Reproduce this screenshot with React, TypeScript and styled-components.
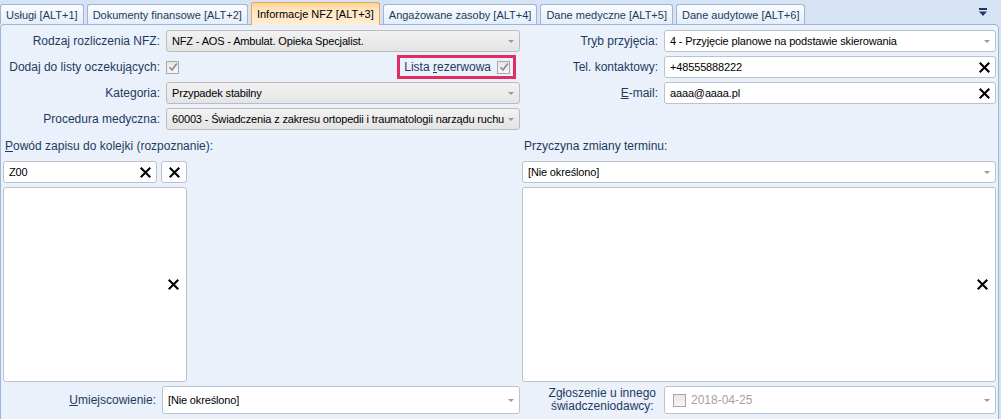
import React from 'react';
import styled, { createGlobalStyle, css } from 'styled-components';

const GlobalStyle = createGlobalStyle`
    html, body {
        margin: 0;
        padding: 0;
        background: #d5e3f5;
    }
    * {
        box-sizing: border-box;
    }
`;

const tabs = [
    { id: 1, label: 'Usługi [ALT+1]' },
    { id: 2, label: 'Dokumenty finansowe [ALT+2]' },
    { id: 3, label: 'Informacje NFZ [ALT+3]', active: true },
    { id: 4, label: 'Angażowane zasoby [ALT+4]' },
    { id: 5, label: 'Dane medyczne [ALT+5]' },
    { id: 6, label: 'Dane audytowe [ALT+6]' },
];

const Window = styled.div`
    width: 1001px;
    height: 419px;
    overflow: hidden;
    background: #d5e3f5;
    font-family: 'Liberation Sans', Arial, sans-serif;
    font-size: 12px;
    color: #000;
`;

const TabStrip = styled.div`
    height: 24px;
    display: flex;
    align-items: flex-end;
    gap: 3px;
    padding-right: 10px;
    position: relative;
    z-index: 1;
`;

const Tab = styled.div<{ $active?: boolean }>`
    height: 20px;
    padding: 0 5px;
    display: flex;
    align-items: center;
    white-space: nowrap;
    font-size: 11px;
    color: #1f3a5c;
    border: 1px solid #9fb5d2;
    border-bottom: none;
    border-radius: 3px 3px 0 0;
    background: linear-gradient(#fbfdff, #e4edf8);

    ${(p) =>
        p.$active &&
        css`
            height: 23px;
            margin-bottom: -1px;
            color: #000;
            border-color: #e6a65a;
            background: linear-gradient(#fcd493 0%, #ffe7c2 35%, #ffeed4 100%);
        `}
`;

const StripSpacer = styled.div`
    flex: 1;
`;

const StripMenu = styled.div`
    align-self: center;
    width: 12px;
    height: 12px;
    display: flex;
    align-items: center;
    justify-content: center;
    margin-right: 2px;
`;

const Panel = styled.div`
    height: 420px;
    margin-right: 2px;
    border: 1px solid #9bb6da;
    border-radius: 4px 4px 0 0;
    background: #eaf1fa;
    padding: 5px 1px 0 2px;
`;

const Columns = styled.div`
    display: grid;
    grid-template-columns: 517px 474px;
    column-gap: 2px;
`;

const FormGrid = styled.div<{ $label: number; $gap: number }>`
    display: grid;
    grid-template-columns: ${(p) => p.$label}px 1fr;
    grid-auto-rows: 22px;
    column-gap: ${(p) => p.$gap}px;
    row-gap: 4px;
    align-items: center;
`;

const Label = styled.label`
    text-align: right;
    color: #1e3a5f;
    white-space: nowrap;
    line-height: 13px;
`;

const Field = styled.div<{ $disabled?: boolean; $tall?: boolean }>`
    height: 22px;
    border-radius: 3px;
    display: flex;
    align-items: center;
    padding: 0 4px 0 5px;
    white-space: nowrap;
    overflow: hidden;
    border: 1px solid #b9c2cf;
    background: #fff;
    ${(p) =>
        p.$disabled &&
        css`
            border-color: #bcbcbc;
            background: linear-gradient(#f2f2f2, #e4e4e4);
        `}
    ${(p) =>
        p.$tall &&
        css`
            height: 28px;
        `}
`;

const FieldText = styled.span<{ $muted?: boolean }>`
    flex: 1;
    overflow: hidden;
    font-size: 11px;
    letter-spacing: -0.15px;
    color: ${(p) => (p.$muted ? '#a3a3a3' : '#000')};
`;

const DateText = styled(FieldText)`
    font-size: 12px;
    letter-spacing: 0;
`;

const Arrow = styled.span`
    width: 0;
    height: 0;
    border-left: 3px solid transparent;
    border-right: 3px solid transparent;
    border-top: 3px solid #9a9a9a;
    margin-left: 2px;
    margin-right: 1px;
    flex: none;
`;

const CheckRow = styled.div`
    display: flex;
    align-items: center;
    height: 22px;
`;

const Check = styled.span<{ $spaced?: boolean }>`
    width: 13px;
    height: 13px;
    border: 1px solid #a7a7a7;
    background: linear-gradient(#e6e6e6, #f6f6f6);
    display: inline-flex;
    align-items: center;
    justify-content: center;
    flex: none;
    ${(p) =>
        p.$spaced &&
        css`
            margin: 0 5px 0 3px;
        `}
`;

const ReserveBox = styled.div`
    margin-left: auto;
    margin-right: 4px;
    height: 24px;
    padding: 0 3px 0 4px;
    border: 3px solid #e12d61;
    display: flex;
    align-items: center;
    gap: 6px;
    color: #1e3a5f;
`;

const ClearIcon = styled.span`
    width: 14px;
    height: 14px;
    display: flex;
    align-items: center;
    justify-content: center;
    flex: none;
`;

const Section = styled.div<{ $width?: number }>`
    width: ${(p) => (p.$width ? `${p.$width}px` : 'auto')};
    margin-top: 8px;
    display: flex;
    flex-direction: column;
`;

const Caption = styled.div`
    height: 16px;
    line-height: 16px;
    color: #1e3a5f;
    padding-left: 2px;
    margin-bottom: 7px;
    white-space: nowrap;
`;

const InputRow = styled.div`
    display: flex;
    gap: 4px;
    margin-bottom: 4px;

    & > ${Field} {
        flex: 1;
    }
`;

const SquareButton = styled.div`
    width: 26px;
    height: 22px;
    border: 1px solid #b9c2cf;
    border-radius: 3px;
    background: #fff;
    display: flex;
    align-items: center;
    justify-content: center;
    flex: none;
`;

const ListBox = styled.div`
    height: 195px;
    border: 1px solid #b9c2cf;
    border-radius: 3px;
    background: #fff;
    display: flex;
    align-items: center;
    justify-content: flex-end;
    padding-right: 6px;
`;

const BottomGrid = styled(FormGrid)`
    grid-auto-rows: 28px;
    margin-top: 4px;
`;

const TwoLineLabel = styled(Label)`
    text-align: center;
    justify-self: end;
`;

const ok = (
    <svg width="10" height="10" viewBox="0 0 10 10">
        <path d="M1.5 5.2 L4 8 L8.8 1.5" fill="none" stroke="#8a8a8a" strokeWidth="1.6" />
    </svg>
);

const X = () => (
    <ClearIcon>
        <svg width="11" height="11" viewBox="0 0 11 11">
            <path d="M1.5 1.5 L9.5 9.5 M9.5 1.5 L1.5 9.5" stroke="#000" strokeWidth="2.1" strokeLinecap="square" />
        </svg>
    </ClearIcon>
);

const App = () => {
    return (
        <>
            <GlobalStyle />
            <Window>
                <TabStrip>
                    {tabs.map((t) => (
                        <Tab key={t.id} $active={t.active}>
                            {t.label}
                        </Tab>
                    ))}
                    <StripSpacer />
                    <StripMenu>
                        <svg width="10" height="9" viewBox="0 0 10 9">
                            <rect x="1" y="0" width="8" height="2" fill="#1f3a5c" />
                            <path d="M1 3.5 H9 L5 8 Z" fill="#1f3a5c" />
                        </svg>
                    </StripMenu>
                </TabStrip>
                <Panel>
                    <Columns>
                        <FormGrid $label={157} $gap={6}>
                            <Label>Rodzaj rozliczenia NFZ:</Label>
                            <Field $disabled>
                                <FieldText>NFZ - AOS - Ambulat. Opieka Specjalist.</FieldText>
                                <Arrow />
                            </Field>
                            <Label>Dodaj do listy oczekujących:</Label>
                            <CheckRow>
                                <Check>{ok}</Check>
                                <ReserveBox>
                                    <span>
                                        Lista <u>r</u>ezerwowa
                                    </span>
                                    <Check>{ok}</Check>
                                </ReserveBox>
                            </CheckRow>
                            <Label>Kategoria:</Label>
                            <Field $disabled>
                                <FieldText>Przypadek stabilny</FieldText>
                                <Arrow />
                            </Field>
                            <Label>Procedura medyczna:</Label>
                            <Field $disabled>
                                <FieldText>
                                    60003 - Świadczenia z zakresu ortopedii i traumatologii narządu ruchu
                                </FieldText>
                                <Arrow />
                            </Field>
                        </FormGrid>
                        <FormGrid $label={136} $gap={6}>
                            <Label>
                                Tr<u>y</u>b przyjęcia:
                            </Label>
                            <Field>
                                <FieldText>4 - Przyjęcie planowe na podstawie skierowania</FieldText>
                                <Arrow />
                            </Field>
                            <Label>Tel. kontaktowy:</Label>
                            <Field>
                                <FieldText>+48555888222</FieldText>
                                <X />
                            </Field>
                            <Label>
                                <u>E</u>-mail:
                            </Label>
                            <Field>
                                <FieldText>aaaa@aaaa.pl</FieldText>
                                <X />
                            </Field>
                        </FormGrid>
                    </Columns>
                    <Columns>
                        <Section $width={184}>
                            <Caption>
                                <u>P</u>owód zapisu do kolejki (rozpoznanie):
                            </Caption>
                            <InputRow>
                                <Field>
                                    <FieldText>Z00</FieldText>
                                    <X />
                                </Field>
                                <SquareButton>
                                    <X />
                                </SquareButton>
                            </InputRow>
                            <ListBox>
                                <X />
                            </ListBox>
                        </Section>
                        <Section>
                            <Caption>Przyczyna zmiany terminu:</Caption>
                            <InputRow>
                                <Field>
                                    <FieldText>[Nie określono]</FieldText>
                                    <Arrow />
                                </Field>
                            </InputRow>
                            <ListBox>
                                <X />
                            </ListBox>
                        </Section>
                    </Columns>
                    <Columns>
                        <BottomGrid $label={153} $gap={6}>
                            <Label>
                                <u>U</u>miejscowienie:
                            </Label>
                            <Field $tall>
                                <FieldText>[Nie określono]</FieldText>
                                <Arrow />
                            </Field>
                        </BottomGrid>
                        <BottomGrid $label={134} $gap={8}>
                            <TwoLineLabel>
                                Zgłoszenie u innego
                                <br />
                                świadczeniodawcy:
                            </TwoLineLabel>
                            <Field $tall>
                                <Check $spaced />
                                <DateText $muted>2018-04-25</DateText>
                                <Arrow />
                            </Field>
                        </BottomGrid>
                    </Columns>
                </Panel>
            </Window>
        </>
    );
};

export default App;
